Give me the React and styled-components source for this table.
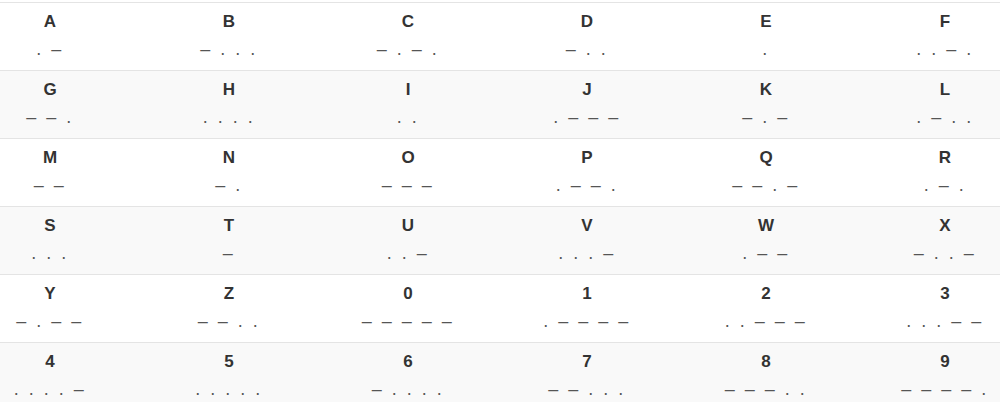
import React from 'react'
import styled, { createGlobalStyle } from 'styled-components'

const GlobalStyle = createGlobalStyle`
  html, body {
    margin: 0;
    padding: 0;
    background: #fff;
    overflow: hidden;
  }
`;

const Page = styled.div`
  width: 1000px;
  height: 402px;
  overflow: hidden;
  padding-top: 2px;
  box-sizing: border-box;
`;

const Table = styled.table`
  margin-left: -39.5px;
  width: 1074px;
  border-collapse: collapse;
  table-layout: fixed;
  font-family: "Liberation Sans", Arial, sans-serif;
`;

const Row = styled.tr`
  background: ${p => (p.$striped ? '#f9f9f9' : '#fff')};
`;

const Cell = styled.td`
  width: 179px;
  height: 68px;
  padding: 7px 0 0;
  box-sizing: border-box;
  vertical-align: top;
  text-align: center;
  border-top: 1px solid #e4e4e4;
`;

const Letter = styled.div`
  font-size: 17px;
  line-height: 24px;
  font-weight: 700;
  color: #333;
`;

const Code = styled.div`
  margin-top: 3px;
  font-size: 18px;
  line-height: 24px;
  letter-spacing: 2.5px;
  color: #555;
  white-space: pre;
`;

const MORSE = {
  A: '.-', B: '-...', C: '-.-.', D: '-..', E: '.', F: '..-.',
  G: '--.', H: '....', I: '..', J: '.---', K: '-.-', L: '.-..',
  M: '--', N: '-.', O: '---', P: '.--.', Q: '--.-', R: '.-.',
  S: '...', T: '-', U: '..-', V: '...-', W: '.--', X: '-..-',
  Y: '-.--', Z: '--..', 0: '-----', 1: '.----', 2: '..---', 3: '...--',
  4: '....-', 5: '.....', 6: '-....', 7: '--...', 8: '---..', 9: '----.',
};

const ORDER = 'ABCDEFGHIJKLMNOPQRSTUVWXYZ0123456789'.split('');

const rows = [];
for (let i = 0; i < ORDER.length; i += 6) rows.push(ORDER.slice(i, i + 6));

const toText = code => code.split('').map(c => (c === '-' ? '–' : '.')).join(' ');

export default function App() {
  return (
    <Page>
      <GlobalStyle />
      <Table>
        <tbody>
          {rows.map((row, i) => (
            <Row key={i} $striped={i % 2 === 1}>
              {row.map(ch => (
                <Cell key={ch}>
                  <Letter>{ch}</Letter>
                  <Code>{toText(MORSE[ch])}</Code>
                </Cell>
              ))}
            </Row>
          ))}
        </tbody>
      </Table>
    </Page>
  )
}
